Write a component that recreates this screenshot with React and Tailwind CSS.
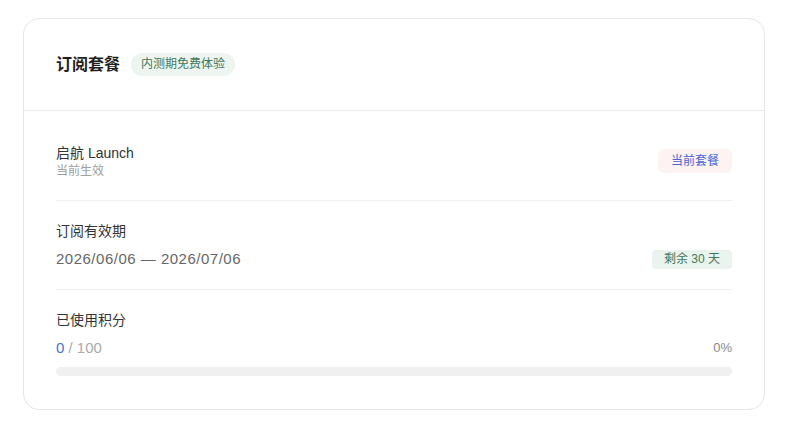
export default function App() {
  const used = 0;
  const total = 100;
  const pct = Math.round((used / total) * 100);

  return (
    <div
      className="min-h-[428px] w-[800px] bg-white pt-[18px] pl-[23px]"
      style={{ fontFamily: '"Liberation Sans", "Noto Sans CJK SC", sans-serif' }}
    >
      <div className="w-[742px] rounded-[16px] border border-[#e6e6e6] bg-white">
        <div className="flex h-[92px] items-center gap-[11px] border-b border-[#ececec] px-[32px]">
          <h2 className="text-[16px] font-semibold text-[#1f1f1f]">订阅套餐</h2>
          <span className="rounded-full bg-[#eef5f0] px-[10px] py-[3px] text-[12px] leading-[17px] text-[#3f7a5a]">
            内测期免费体验
          </span>
        </div>

        <div className="px-[32px]">
          <div className="flex items-center justify-between border-b border-[#f0f0f0] pt-[32px] pb-[21px]">
            <div>
              <p className="text-[14px] leading-[20px] text-[#333]">启航 Launch</p>
              <p className="text-[12px] leading-[16px] text-[#a0a0a0]">当前生效</p>
            </div>
            <span className="rounded-[6px] bg-[#fdf3f2] px-[13px] py-[3px] text-[12px] leading-[18px] text-[#4a63d6]">
              当前套餐
            </span>
          </div>

          <div className="border-b border-[#f0f0f0] pt-[20px] pb-[20px]">
            <p className="text-[14px] leading-[20px] text-[#333]">订阅有效期</p>
            <div className="mt-[8px] flex items-center justify-between">
              <p className="text-[15px] leading-[20px] tracking-[0.5px] text-[#666]">2026/06/06 — 2026/07/06</p>
              <span className="rounded-[4px] bg-[#eaf3ee] px-[12px] py-[1px] text-[12px] leading-[17px] text-[#3f7a5a]">
                剩余 30 天
              </span>
            </div>
          </div>

          <div className="pt-[20px] pb-[33px]">
            <p className="text-[14px] leading-[20px] text-[#333]">已使用积分</p>
            <div className="mt-[8px] flex items-center justify-between">
              <p className="text-[15px] leading-[20px] text-[#aaa]">
                <span className="text-[#4a6ee0]">{used}</span> / {total}
              </p>
              <span className="text-[13px] leading-[20px] text-[#888]">{pct}%</span>
            </div>
            <div className="mt-[9px] h-[9px] w-full rounded-full bg-[#f0f0f0]">
              <div className="h-full rounded-full bg-[#4a6ee0]" style={{ width: `${pct}%` }} />
            </div>
          </div>
        </div>
      </div>
    </div>
  );
}
